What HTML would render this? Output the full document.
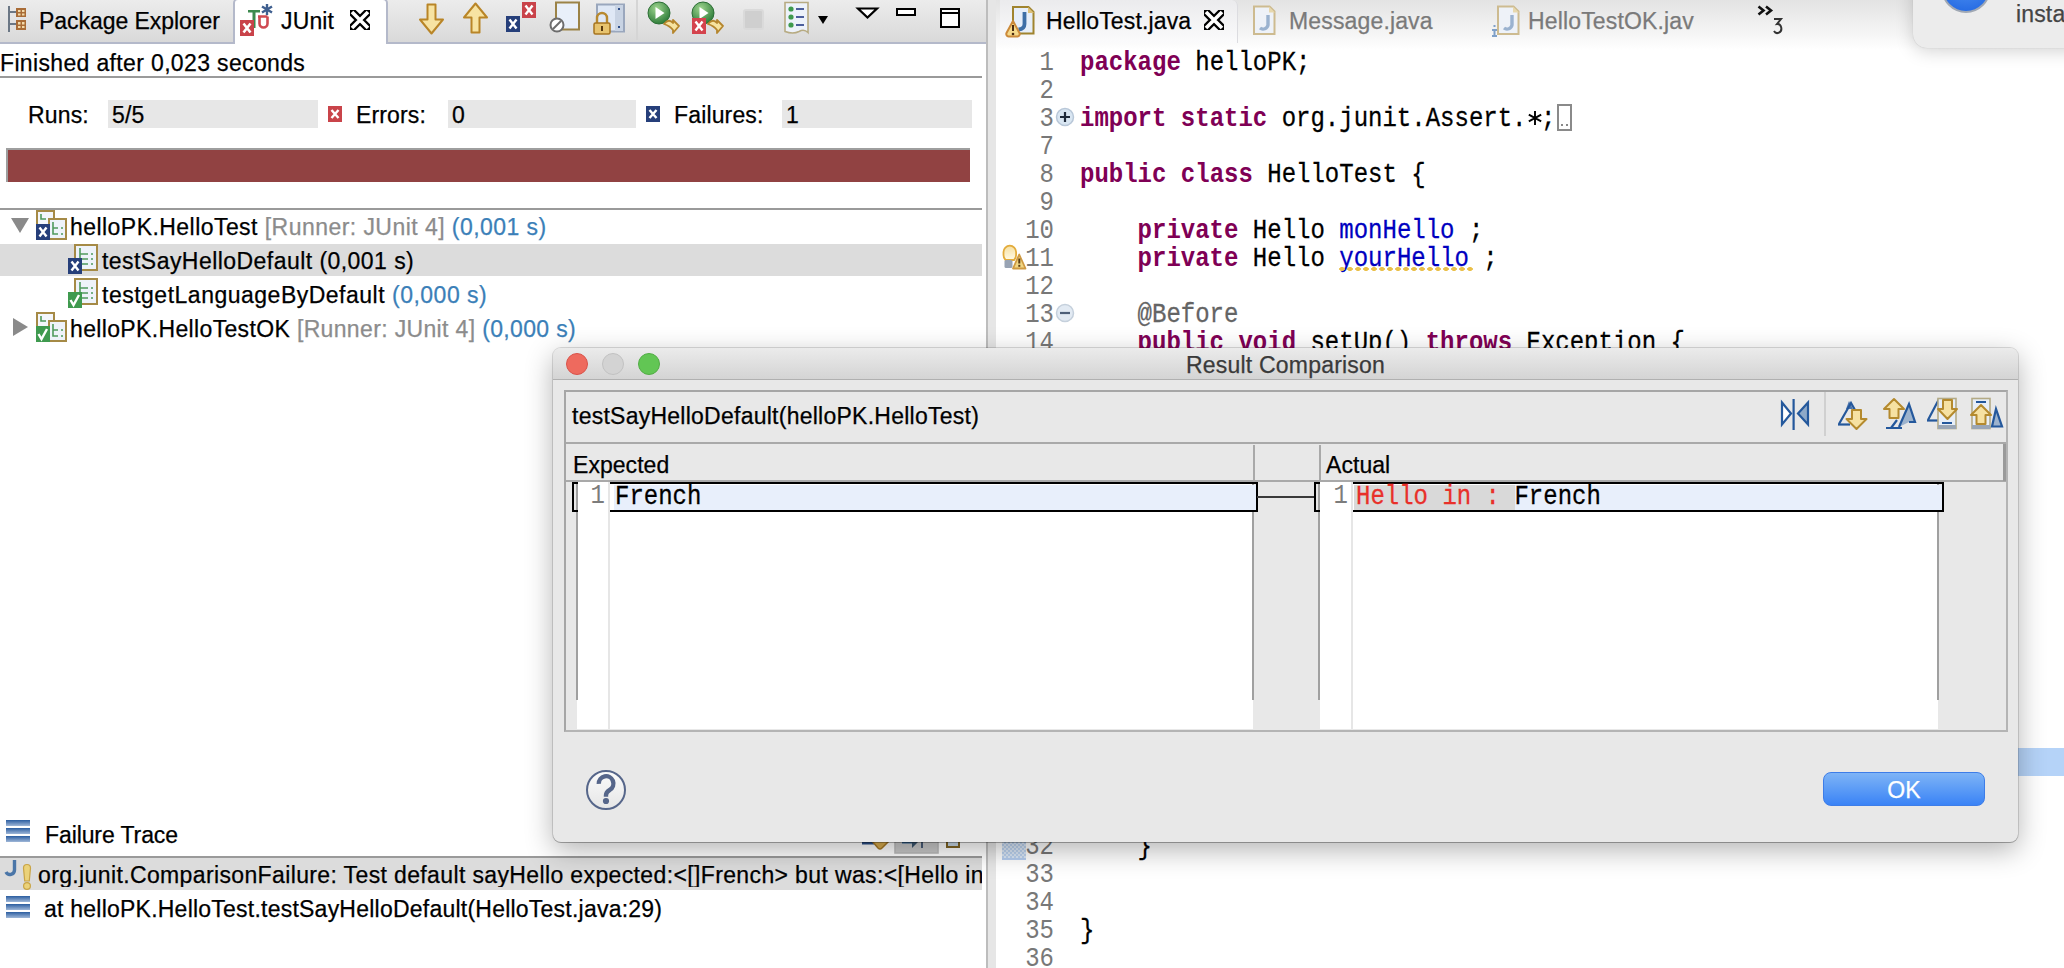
<!DOCTYPE html>
<html><head><meta charset="utf-8">
<style>
*{margin:0;padding:0;box-sizing:border-box}
html,body{width:2064px;height:968px;overflow:hidden;background:#fff;position:relative}
body{font-family:"Liberation Sans",sans-serif;font-size:22px;color:#000;-webkit-text-stroke:0.25px currentColor}
.a{position:absolute}
.t{position:absolute;white-space:pre;line-height:24px;letter-spacing:0.15px;font-size:23px;margin-top:1px}
.m{position:absolute;white-space:pre;font-family:"Liberation Mono",monospace;font-size:24px;line-height:28px;transform:scaleY(1.12);transform-origin:0 20.4px}
.kw{color:#7f0055;font-weight:bold;-webkit-text-stroke:0}
.fld{color:#0000c0}
.ln{color:#787878;text-align:right;-webkit-text-stroke:0}
.gray{color:#8c8c8c}
.blue{color:#3b7fb8}
svg{position:absolute;overflow:visible}
</style></head><body>

<!-- ============ LEFT PANEL ============ -->
<div class="a" id="left" style="left:0;top:0;width:986px;height:968px;background:#fff">
  <!-- tab bar -->
  <div class="a" style="left:0;top:0;width:986px;height:44px;background:linear-gradient(#ececec,#d9d9d9);border-bottom:2px solid #b4b9ca"></div>
  <!-- active JUnit tab -->
  <div class="a" style="left:233px;top:-2px;width:155px;height:46px;background:#fff;border:2px solid #b4b9ca;border-bottom:none;border-radius:5px 5px 0 0"></div>
  <div class="t" style="left:39px;top:8px;letter-spacing:-0.05px">Package Explorer</div>
  <div class="t" style="left:281px;top:8px">JUnit</div>
  <div class="a" style="left:986px;top:0;width:2px;height:968px;background:#bdbdbd"></div>
  <div class="a" style="left:988px;top:0;width:8px;height:968px;background:#e6e6e6"></div>

  <div class="t" style="left:0px;top:50px;letter-spacing:0.35px">Finished after 0,023 seconds</div>
  <div class="a" style="left:0;top:76px;width:982px;height:2px;background:#9a9a9a"></div>

  <div class="t" style="left:28px;top:102px">Runs:</div>
  <div class="a" style="left:108px;top:100px;width:210px;height:28px;background:#e7e7e7"></div>
  <div class="t" style="left:112px;top:102px">5/5</div>
  <div class="t" style="left:356px;top:102px">Errors:</div>
  <div class="a" style="left:448px;top:100px;width:188px;height:28px;background:#e7e7e7"></div>
  <div class="t" style="left:452px;top:102px">0</div>
  <div class="t" style="left:674px;top:102px">Failures:</div>
  <div class="a" style="left:782px;top:100px;width:190px;height:28px;background:#e7e7e7"></div>
  <div class="t" style="left:786px;top:102px">1</div>

  <div class="a" style="left:6px;top:148px;width:964px;height:34px;background:#914242;border-top:2px solid #9e9e9e;border-left:2px solid #9e9e9e"></div>
  <div class="a" style="left:0;top:208px;width:982px;height:2px;background:#9a9a9a"></div>

  <!-- tree -->
  <div class="a" style="left:0;top:244px;width:982px;height:32px;background:#dcdcdc"></div>
  <div class="t" style="left:70px;top:214px;letter-spacing:0.45px">helloPK.HelloTest <span class="gray">[Runner: JUnit 4]</span> <span class="blue">(0,001 s)</span></div>
  <div class="t" style="left:102px;top:248px;letter-spacing:0.45px">testSayHelloDefault (0,001 s)</div>
  <div class="t" style="left:102px;top:282px;letter-spacing:0.50px">testgetLanguageByDefault <span class="blue">(0,000 s)</span></div>
  <div class="t" style="left:70px;top:316px;letter-spacing:0.35px">helloPK.HelloTestOK <span class="gray">[Runner: JUnit 4]</span> <span class="blue">(0,000 s)</span></div>

  <!-- failure trace -->
  <div class="t" style="left:45px;top:822px;letter-spacing:-0.10px">Failure Trace</div>
  <div class="a" style="left:0;top:856px;width:982px;height:2px;background:#9a9a9a"></div>
  <div class="a" style="left:0;top:858px;width:982px;height:32px;background:#dcdcdc"></div>
  <div class="t" style="left:38px;top:862px;letter-spacing:0.37px;width:944px;overflow:hidden">org.junit.ComparisonFailure: Test default sayHello expected:&lt;[]French&gt; but was:&lt;[Hello in</div>
  <div class="t" style="left:44px;top:896px;letter-spacing:0.23px">at helloPK.HelloTest.testSayHelloDefault(HelloTest.java:29)</div>
</div>

<!-- ============ EDITOR ============ -->
<div class="a" id="editor" style="left:996px;top:0;width:1068px;height:968px;background:#fff;overflow:hidden">
  <div class="a" style="left:0;top:0;width:1068px;height:50px;background:linear-gradient(#e3e3e3,#f6f6f6 70%,#fff)"></div>
  <div class="a" style="left:4px;top:0;width:238px;height:43px;background:linear-gradient(#ebebed,#fbfbfc);border-right:1px solid #dcdce0;border-radius:0 6px 0 0"></div>
  <div class="t" style="left:50px;top:8px">HelloTest.java</div>
  <div class="t" style="left:293px;top:8px;color:#7a7a7a">Message.java</div>
  <div class="t" style="left:532px;top:8px;color:#7a7a7a">HelloTestOK.jav</div>
  <div class="m ln" style="left:0;top:50px;width:58px">1</div>
  <div class="m" style="left:84px;top:50px"><span class="kw">package</span> helloPK;</div>
  <div class="m ln" style="left:0;top:78px;width:58px">2</div>
  <div class="m ln" style="left:0;top:106px;width:58px">3</div>
  <div class="m" style="left:84px;top:106px"><span class="kw">import</span> <span class="kw">static</span> org.junit.Assert. ;</div>
  <div class="m ln" style="left:0;top:134px;width:58px">7</div>
  <div class="m ln" style="left:0;top:162px;width:58px">8</div>
  <div class="m" style="left:84px;top:162px"><span class="kw">public</span> <span class="kw">class</span> HelloTest {</div>
  <div class="m ln" style="left:0;top:190px;width:58px">9</div>
  <div class="m ln" style="left:0;top:218px;width:58px">10</div>
  <div class="m" style="left:84px;top:218px">    <span class="kw">private</span> Hello <span class="fld">monHello</span> ;</div>
  <div class="m ln" style="left:0;top:246px;width:58px">11</div>
  <div class="m" style="left:84px;top:246px">    <span class="kw">private</span> Hello <span class="fld">yourHello</span> ;</div>
  <div class="m ln" style="left:0;top:274px;width:58px">12</div>
  <div class="m ln" style="left:0;top:302px;width:58px">13</div>
  <div class="m" style="left:84px;top:302px">    <span style="color:#646464">@Before</span></div>
  <div class="m ln" style="left:0;top:330px;width:58px">14</div>
  <div class="m" style="left:84px;top:330px">    <span class="kw">public</span> <span class="kw">void</span> setUp() <span class="kw">throws</span> Exception {</div>
  <div class="m ln" style="left:0;top:834px;width:58px">32</div>
  <div class="m" style="left:84px;top:834px">    }</div>
  <div class="m ln" style="left:0;top:862px;width:58px">33</div>
  <div class="m ln" style="left:0;top:890px;width:58px">34</div>
  <div class="m ln" style="left:0;top:918px;width:58px">35</div>
  <div class="m" style="left:84px;top:918px">}</div>
  <div class="m ln" style="left:0;top:946px;width:58px">36</div>
</div>


<!-- ============ ICONS (left + editor) ============ -->
<!-- package explorer icon -->
<svg style="left:0;top:0" width="40" height="40">
  <rect x="8" y="6" width="2" height="26" fill="#6b7785"/>
  <rect x="10" y="11" width="6" height="2" fill="#6b7785"/><rect x="10" y="23" width="6" height="2" fill="#6b7785"/>
  <rect x="16" y="8" width="10" height="9" fill="#a96c37"/><rect x="16" y="20" width="10" height="10" fill="#a96c37"/>
  <rect x="18" y="10" width="2.5" height="2" fill="#f2d9a9"/><rect x="22" y="10" width="2.5" height="2" fill="#f2d9a9"/>
  <rect x="18" y="13.5" width="2.5" height="2" fill="#f2d9a9"/><rect x="22" y="13.5" width="2.5" height="2" fill="#f2d9a9"/>
  <rect x="18" y="22" width="2.5" height="2.5" fill="#f2d9a9"/><rect x="22" y="22" width="2.5" height="2.5" fill="#f2d9a9"/>
  <rect x="18" y="26" width="2.5" height="2" fill="#f2d9a9"/><rect x="22" y="26" width="2.5" height="2" fill="#f2d9a9"/>
</svg>
<!-- junit tab icon -->
<svg style="left:240px;top:0" width="40" height="40">
  <rect x="8" y="10" width="12" height="2.5" fill="#3d8a4e"/><rect x="12.5" y="10" width="3" height="18" fill="#3d8a4e"/>
  <path d="M18 16.5 h9.5 M19.5 16.5 v7 a4 4 0 0 0 8 0 v-7" stroke="#cf4a52" stroke-width="2.6" fill="none"/>
  <path d="M27 4 v11 M22 6.5 l10 6 M32 6.5 l-10 6" stroke="#3f5f8f" stroke-width="2.4"/>
  <rect x="0" y="20" width="14" height="16" fill="#c9434a"/>
  <path d="M3.5 23.5 l7 9 M10.5 23.5 l-7 9" stroke="#fff" stroke-width="2.6"/>
</svg>
<!-- junit tab close -->
<svg style="left:348px;top:8px" width="24" height="24">
  <svg x="2" y="2" width="20" height="20" style="position:static;overflow:hidden"><path d="M-1 -1 L21 21 M21 -1 L-1 21" stroke="#000" stroke-width="8"/>
  <path d="M2 2 L18 18 M18 2 L2 18" stroke="#fff" stroke-width="3.6"/></svg>
</svg>
<!-- down arrow -->
<svg style="left:418px;top:2px" width="30" height="34">
  <path d="M9.5 2.5 h8 v15 h7.5 l-11.5 14 l-11.5 -14 h7.5 z" fill="#f7e3a2" stroke="#b98527" stroke-width="2" stroke-linejoin="round"/>
</svg>
<!-- up arrow -->
<svg style="left:462px;top:2px" width="30" height="34">
  <path d="M13.5 1.5 l11.5 14 h-7.5 v15 h-8 v-15 h-7.5 z" fill="#f7e3a2" stroke="#b98527" stroke-width="2" stroke-linejoin="round"/>
</svg>
<!-- next/prev failure (blue x + red x) -->
<svg style="left:504px;top:0" width="36" height="36">
  <rect x="18" y="2" width="14" height="16" fill="#c9434a"/><path d="M21.5 5.5 l7 9 M28.5 5.5 l-7 9" stroke="#fff" stroke-width="2.4"/>
  <rect x="2" y="16" width="14" height="16" fill="#263f7a"/><path d="M5.5 19.5 l7 9 M12.5 19.5 l-7 9" stroke="#fff" stroke-width="2.4"/>
</svg>
<!-- filter page -->
<svg style="left:548px;top:0" width="36" height="36">
  <rect x="8" y="2.5" width="23" height="27" fill="#e9f0fa" stroke="#9b8347" stroke-width="2"/>
  <circle cx="9" cy="25" r="6.5" fill="#fff" stroke="#6d6d6d" stroke-width="2"/>
  <path d="M5 29 L13 21" stroke="#6d6d6d" stroke-width="2"/>
</svg>
<!-- scroll lock -->
<svg style="left:592px;top:0" width="36" height="36">
  <rect x="5" y="4.5" width="27" height="27" fill="#dfe8f5" stroke="#9aa7bd" stroke-width="2"/>
  <rect x="23" y="5" width="8" height="26" fill="#c8d3e3"/>
  <rect x="26" y="8" width="2" height="2" fill="#2e4f8a"/><rect x="26" y="26" width="2" height="2" fill="#2e4f8a"/>
  <path d="M5 24 v-6 a5 5 0 0 1 10 0 v6" stroke="#b8892e" stroke-width="2.4" fill="none"/>
  <rect x="2" y="23" width="16" height="11" rx="1.5" fill="#e7c36e" stroke="#a6741f" stroke-width="1.5"/>
  <rect x="9" y="26" width="2" height="5" fill="#5a3a10"/>
</svg>
<div class="a" style="left:636px;top:0;width:2px;height:40px;background:#d5d5d5"></div>
<!-- rerun -->
<svg style="left:646px;top:0" width="40" height="40">
  <defs><radialGradient id="gg" cx="0.4" cy="0.3" r="0.7"><stop offset="0" stop-color="#9fd58f"/><stop offset="1" stop-color="#2f7d3a"/></radialGradient></defs>
  <circle cx="13" cy="13" r="11" fill="url(#gg)" stroke="#2d6f36" stroke-width="1"/>
  <path d="M9.5 7 L18.5 13 L9.5 19 z" fill="#fff"/>
  <path d="M18 24 q5 -6 9 -1 v-3 l6 6 l-6 7 v-3 q-3 -4 -9 -6 z" fill="#f6e3a0" stroke="#b5862d" stroke-width="1.8" stroke-linejoin="round"/>
</svg>
<!-- rerun failed first -->
<svg style="left:690px;top:0" width="40" height="40">
  <circle cx="13" cy="13" r="11" fill="url(#gg)" stroke="#2d6f36" stroke-width="1"/>
  <path d="M9.5 7 L18.5 13 L9.5 19 z" fill="#fff"/>
  <rect x="2" y="18" width="14" height="16" fill="#d4434d"/><path d="M5.5 21.5 l7 9 M12.5 21.5 l-7 9" stroke="#fff" stroke-width="2.4"/>
  <path d="M18 24 q5 -6 9 -1 v-3 l6 6 l-6 7 v-3 q-3 -4 -9 -6 z" fill="#f6e3a0" stroke="#b5862d" stroke-width="1.8" stroke-linejoin="round"/>
</svg>
<!-- stop disabled -->
<div class="a" style="left:743px;top:9px;width:21px;height:21px;border-radius:3px;background:#cfcfcf;border:2px solid #dadada"></div>
<!-- history -->
<svg style="left:782px;top:0" width="34" height="36">
  <path d="M3 2.5 h23 v30 q-4 -4 -9 -1 q-6 3 -14 0 z" fill="#edf2fa" stroke="#b7ab82" stroke-width="1.6"/>
  <circle cx="9" cy="9" r="2.6" fill="#3f9a4d"/><circle cx="9" cy="17" r="2.6" fill="#3f9a4d"/><circle cx="9" cy="25" r="2.6" fill="#3f9a4d"/>
  <rect x="14" y="8" width="8" height="2" fill="#4c5f9c"/><rect x="14" y="16" width="8" height="2" fill="#4c5f9c"/><rect x="14" y="24" width="8" height="2" fill="#4c5f9c"/>
</svg>
<svg style="left:818px;top:16px" width="12" height="10"><path d="M0 0 h10 l-5 8 z" fill="#000"/></svg>
<!-- view menu -->
<svg style="left:856px;top:6px" width="24" height="14"><path d="M2 2.5 h19 l-9.5 9 z" fill="#fff" stroke="#000" stroke-width="2.2" stroke-linejoin="miter"/></svg>
<!-- minimize -->
<div class="a" style="left:896px;top:8px;width:20px;height:8px;border:2px solid #000;background:#fff"></div>
<!-- maximize -->
<div class="a" style="left:940px;top:8px;width:20px;height:20px;border:2px solid #000;border-top-width:6px;background:#fff"></div>
<div class="a" style="left:942px;top:10px;width:16px;height:2px;background:#fff"></div>

<!-- runs row icons -->
<svg style="left:328px;top:106px" width="14" height="16"><rect width="14" height="16" fill="#c9444a"/><path d="M3.5 4 l7 8 M10.5 4 l-7 8" stroke="#fff" stroke-width="2.4"/></svg>
<svg style="left:646px;top:106px" width="14" height="16"><rect width="14" height="16" fill="#263f7a"/><path d="M3.5 4 l7 8 M10.5 4 l-7 8" stroke="#fff" stroke-width="2.4"/></svg>

<!-- tree triangles -->
<svg style="left:10px;top:217px" width="20" height="18"><path d="M1 1 h18 l-9 15 z" fill="#8a8a8a"/></svg>
<svg style="left:12px;top:317px" width="18" height="20"><path d="M1 1 v18 l15 -9 z" fill="#8a8a8a"/></svg>
<!-- suite icon row1 -->
<svg style="left:34px;top:208px" width="36" height="34">
  <rect x="3" y="3" width="17" height="15" fill="#f3f6fb" stroke="#a58a46" stroke-width="2"/>
  <path d="M7 6 v5 h5" stroke="#4f9a5d" stroke-width="1.6" fill="none"/>
  <rect x="15" y="11" width="17" height="20" fill="#eef3fa" stroke="#a58a46" stroke-width="2"/>
  <path d="M19 14 v12 h5 M19 20 h5 M27 20 h2 M27 26 h2" stroke="#4f9a5d" stroke-width="1.6" fill="none"/>
  <rect x="2" y="16" width="14" height="16" fill="#263f7a"/><path d="M5.5 19.5 l7 9 M12.5 19.5 l-7 9" stroke="#fff" stroke-width="2.4"/>
</svg>
<!-- test icon row2 -->
<svg style="left:66px;top:242px" width="36" height="34">
  <rect x="9" y="3" width="22" height="25" fill="#eef3fa" stroke="#a58a46" stroke-width="2"/>
  <path d="M14 6 v16 h8 M14 12 h8 M14 17 h8 M25 12 h2 M25 17 h2 M25 22 h2" stroke="#4f9a5d" stroke-width="1.6" fill="none"/>
  <rect x="2" y="16" width="14" height="16" fill="#263f7a"/><path d="M5.5 19.5 l7 9 M12.5 19.5 l-7 9" stroke="#fff" stroke-width="2.4"/>
</svg>
<!-- test icon row3 -->
<svg style="left:66px;top:276px" width="36" height="34">
  <rect x="9" y="3" width="22" height="25" fill="#eef3fa" stroke="#a58a46" stroke-width="2"/>
  <path d="M14 6 v16 h8 M14 12 h8 M14 17 h8 M25 12 h2 M25 17 h2 M25 22 h2" stroke="#4f9a5d" stroke-width="1.6" fill="none"/>
  <rect x="2" y="16" width="14" height="16" fill="#3f9a4f"/><path d="M4.5 24 l3 5 l5.5 -10" stroke="#fff" stroke-width="2.4" fill="none"/>
</svg>
<!-- suite icon row4 -->
<svg style="left:34px;top:310px" width="36" height="34">
  <rect x="3" y="3" width="17" height="15" fill="#f3f6fb" stroke="#a58a46" stroke-width="2"/>
  <path d="M7 6 v5 h5" stroke="#4f9a5d" stroke-width="1.6" fill="none"/>
  <rect x="15" y="11" width="17" height="20" fill="#eef3fa" stroke="#a58a46" stroke-width="2"/>
  <path d="M19 14 v12 h5 M19 20 h5 M27 20 h2 M27 26 h2" stroke="#4f9a5d" stroke-width="1.6" fill="none"/>
  <rect x="2" y="16" width="14" height="16" fill="#3f9a4f"/><path d="M4.5 24 l3 5 l5.5 -10" stroke="#fff" stroke-width="2.4" fill="none"/>
</svg>

<!-- failure trace icons -->
<svg style="left:6px;top:820px" width="26" height="24">
  <defs><linearGradient id="bl" x1="0" y1="0" x2="0" y2="1"><stop offset="0" stop-color="#2b5da0"/><stop offset="1" stop-color="#9fb7d8"/></linearGradient></defs>
  <rect x="0" y="0" width="24" height="6" fill="url(#bl)"/><rect x="0" y="8" width="24" height="6" fill="url(#bl)"/><rect x="0" y="16" width="24" height="6" fill="url(#bl)"/>
</svg>
<svg style="left:6px;top:896px" width="26" height="24">
  <rect x="0" y="0" width="24" height="6" fill="url(#bl)"/><rect x="0" y="8" width="24" height="6" fill="url(#bl)"/><rect x="0" y="16" width="24" height="6" fill="url(#bl)"/>
</svg>
<svg style="left:4px;top:858px" width="30" height="34">
  <path d="M10.5 2 v10 a4.5 4.5 0 0 1 -8.5 2" stroke="#4b76a8" stroke-width="3.4" fill="none"/>
  <path d="M19.5 10 a3.5 3.5 0 0 1 7 0 l-1.2 13 h-4.6 z" fill="#ebd27a" stroke="#c9a446" stroke-width="1.2"/>
  <circle cx="23" cy="28" r="3.4" fill="#ebd27a" stroke="#c9a446" stroke-width="1.2"/>
</svg>
<!-- failure trace toolbar (mostly hidden) -->
<svg style="left:860px;top:830px" width="100" height="26">
  <path d="M2 13 h12" stroke="#2b4f87" stroke-width="3"/>
  <path d="M12 11 h17 l-7 7 q-2 2 -4 0 z" fill="#d9ad4f" stroke="#a87a26" stroke-width="1.5"/>
  <rect x="35" y="4" width="43" height="19" fill="#c9c9c9" stroke="#bdbdbd" stroke-width="1.6"/>
  <path d="M42 12 h14" stroke="#33638f" stroke-width="3"/>
  <path d="M52 10 h8 l-8 8 z" fill="#3b556e"/>
  <rect x="61" y="10" width="2" height="8" fill="#4a5d78"/>
  <rect x="87" y="8" width="12" height="9" fill="#c8d8e6" stroke="#7f6424" stroke-width="2"/>
</svg>

<!-- editor tab icons -->
<svg style="left:1004px;top:4px" width="34" height="34">
  <path d="M9 3 h15.5 l5 5 v21.5 h-20.5 z" fill="#e6eef9" stroke="#a0842f" stroke-width="2"/>
  <path d="M24 3 v6 h6" fill="#dcc07a"/>
  <path d="M20.5 8 v12 q0 5 -6 5.5" stroke="#3d6ea6" stroke-width="3.8" fill="none"/>
  <path d="M9 17 l-6.5 12 a2.5 2.5 0 0 0 2 3.5 h9 a2.5 2.5 0 0 0 2 -3.5 z" fill="#f5d98a" stroke="#cc8a3a" stroke-width="2" stroke-linejoin="round"/>
  <rect x="8" y="21" width="2" height="6" fill="#4a2a10"/><circle cx="9" cy="30" r="1.3" fill="#4a2a10"/>
</svg>
<svg style="left:1202px;top:8px" width="24" height="24">
  <svg x="2" y="2" width="20" height="20" style="position:static;overflow:hidden"><path d="M-1 -1 L21 21 M21 -1 L-1 21" stroke="#000" stroke-width="8"/>
  <path d="M2 2 L18 18 M18 2 L2 18" stroke="#fff" stroke-width="3.6"/></svg>
</svg>
<svg style="left:1250px;top:4px" width="34" height="34">
  <path d="M4 2.5 h15.5 l5 5 v22.5 h-20.5 z" fill="#eef2f8" stroke="#cdbb90" stroke-width="2"/>
  <path d="M19 2.5 v6 h6" fill="#e7d8ad"/>
  <path d="M18 11 v10 a5 5 0 0 1 -8 3" stroke="#9ab2cf" stroke-width="3.4" fill="none"/>
</svg>
<svg style="left:1490px;top:4px" width="34" height="34">
  <path d="M8 2.5 h15.5 l5 5 v22.5 h-20.5 z" fill="#eef2f8" stroke="#cdbb90" stroke-width="2"/>
  <path d="M23 2.5 v6 h6" fill="#e7d8ad"/>
  <path d="M22 11 v10 a5 5 0 0 1 -8 3" stroke="#9ab2cf" stroke-width="3.4" fill="none"/>
  <rect x="2" y="25" width="5" height="2" fill="#7fa0c8"/><rect x="3.5" y="27" width="2" height="6" fill="#7fa0c8"/><rect x="2" y="31" width="5" height="2" fill="#7fa0c8"/><rect x="3.5" y="21" width="2" height="2" fill="#7fa0c8"/>
</svg>
<!-- overflow >>3 -->
<svg style="left:1756px;top:4px" width="32" height="30">
  <path d="M2.5 2.5 l5 4 l-5 4 M10 2.5 l5 4 l-5 4" stroke="#111" stroke-width="2.6" fill="none"/>
  <path d="M18 15 h7 l-4 5 a4 4.5 0 1 1 -3 7" stroke="#333" stroke-width="2" fill="none"/>
</svg>

<!-- gutter icons -->
<svg style="left:1055px;top:107px" width="22" height="22">
  <circle cx="10" cy="10" r="8.5" fill="#d9e6f2" stroke="#b8c7d8" stroke-width="1.5"/>
  <path d="M5 10 h10 M10 5 v10" stroke="#1f2a3a" stroke-width="2.2"/>
</svg>
<svg style="left:1055px;top:303px" width="22" height="22">
  <circle cx="10" cy="10" r="8.5" fill="#e2eaf3" stroke="#c5d0dc" stroke-width="1.5"/>
  <path d="M5 10 h10" stroke="#4e5f78" stroke-width="2.2"/>
</svg>
<svg style="left:1000px;top:242px" width="30" height="30">
  <defs><linearGradient id="bulb" x1="0" y1="0" x2="0" y2="1"><stop offset="0" stop-color="#f6dfa0"/><stop offset="1" stop-color="#fffbe8"/></linearGradient></defs>
  <path d="M3.5 10 a6.3 6.3 0 0 1 12.6 0 v3 q0 3 -2 5 h-8.6 q-2 -2 -2 -5 z" fill="url(#bulb)" stroke="#e3ac3c" stroke-width="1.8"/>
  <rect x="4.5" y="18" width="8" height="8" rx="1.5" fill="#98a3b3"/>
  <path d="M19.2 12.5 l-6.2 14 h12.5 z" fill="#f1d683" stroke="#cf9a42" stroke-width="1.8" stroke-linejoin="round"/>
  <rect x="18.3" y="16.5" width="2" height="5" fill="#5a3c12"/><rect x="18.3" y="22.8" width="2" height="2" fill="#5a3c12"/>
</svg>
<svg style="left:1528px;top:111px" width="14" height="14"><path d="M7 0 v14 M0.8 3.6 L13.2 10.4 M0.8 10.4 L13.2 3.6" stroke="#000" stroke-width="1.9"/></svg>
<!-- folded import box -->
<div class="a" style="left:1557px;top:104px;width:15px;height:27px;border:2px solid #8a8a8a;background:#fff"></div>
<div class="a" style="left:1561px;top:124px;width:2px;height:2px;background:#888"></div><div class="a" style="left:1566px;top:124px;width:2px;height:2px;background:#888"></div>
<!-- warning underline -->
<div class="a" style="left:1338px;top:267px;width:135px;height:4px;background:radial-gradient(ellipse 3px 2px at 4px 2px,#eac04a 85%,transparent 100%) 0 0/8px 4px repeat-x"></div>
<!-- checker marker line 32 -->
<div class="a" style="left:1002px;top:842px;width:24px;height:18px;background:repeating-conic-gradient(#bcd3f0 0 25%,#dce8f7 0 50%) 0 0/4px 4px;border-bottom:2px solid #b5cdef"></div>
<!-- right blue highlight -->
<div class="a" style="left:2000px;top:748px;width:64px;height:28px;background:#b5d3f8"></div>
<!-- notification popup -->
<div class="a" style="left:1913px;top:-20px;width:180px;height:68px;background:#ececec;border-radius:14px;box-shadow:0 3px 18px rgba(0,0,0,0.18),0 0 1px rgba(0,0,0,0.2)"></div>
<div class="a" style="left:1941px;top:-38px;width:50px;height:51px;border-radius:50%;background:radial-gradient(circle at 50% 30%,#5a9cf5,#1c62e0);border:2px solid #a0a8b4"></div>
<div class="t" style="left:2016px;top:1px;color:#444">insta</div>

<!-- ============ DIALOG ============ -->
<div class="a" id="dlg" style="left:553px;top:348px;width:1465px;height:494px;background:#e8e8e8;border-radius:8px;box-shadow:0 8px 28px rgba(0,0,0,0.3),0 1px 0 rgba(0,0,0,0.2),0 0 0 1px rgba(0,0,0,0.13)">
  <div class="a" style="left:0;top:0;width:1465px;height:32px;background:linear-gradient(#ebebeb,#d4d4d4);border-bottom:1px solid #b0b0b0;border-radius:8px 8px 0 0"></div>
  <div class="t" style="left:0;top:4px;width:1465px;text-align:center;color:#3a3a3a;letter-spacing:0.2px">Result Comparison</div>
  <div class="a" style="left:13px;top:5px;width:22px;height:22px;border-radius:50%;background:#ee6a5e;border:1px solid #d9534a"></div>
  <div class="a" style="left:49px;top:5px;width:22px;height:22px;border-radius:50%;background:#d3d3d3;border:1px solid #c2c2c2"></div>
  <div class="a" style="left:85px;top:5px;width:22px;height:22px;border-radius:50%;background:#62c654;border:1px solid #52ad45"></div>
  <!-- group box -->
  <div class="a" style="left:11px;top:42px;width:1444px;height:342px;border:2px solid #a6a6a6;border-right-color:#b4b4b4;border-bottom-color:#b4b4b4"></div>
  <div class="t" style="left:19px;top:55px;letter-spacing:0.25px">testSayHelloDefault(helloPK.HelloTest)</div>
  <div class="a" style="left:13px;top:94px;width:1440px;height:2px;background:#a9a9a9"></div>
  <div class="a" style="left:1271px;top:44px;width:2px;height:44px;background:#d0d0d0"></div>
  <!-- dialog toolbar icons (abs x - 553, abs y - 348) -->
  <svg style="left:1226px;top:50px" width="36" height="34">
    <path d="M3 4.5 L12 15.5 L3 26.5 z" fill="#fff" stroke="#24589c" stroke-width="2.2" stroke-linejoin="miter"/>
    <rect x="13.5" y="1" width="2.2" height="31" fill="#24589c"/>
    <path d="M29 4.5 L19 15.5 L29 26.5 z" fill="#8ea9c8" stroke="#24589c" stroke-width="2.2"/>
  </svg>
  <svg style="left:1284px;top:49px" width="36" height="40">
    <path d="M2 27 L14 6 L18 13" fill="none" stroke="#24589c" stroke-width="2.2"/>
    <path d="M1 27.5 h12" stroke="#24589c" stroke-width="2.2"/>
    <path d="M12 4 L16 12 h-7 z" fill="#24589c" opacity="0.8"/>
    <path d="M15 13 h9 v9 h5.5 l-10 10 l-10 -10 h5.5 z" fill="#f6e1a2" stroke="#b48a2e" stroke-width="2" stroke-linejoin="round"/>
  </svg>
  <svg style="left:1329px;top:49px" width="36" height="40">
    <path d="M12 2 l10 10 h-5.5 v9 h-9 v-9 h-5.5 z" fill="#f6e1a2" stroke="#b48a2e" stroke-width="2" stroke-linejoin="round"/>
    <path d="M17 30 L27 7 L33 25 h-6 M4 31 h16 M9 31 l6 -8" fill="#9db3cd" stroke="#24589c" stroke-width="2.2"/>
  </svg>
  <svg style="left:1373px;top:49px" width="36" height="40">
    <path d="M2 23 L12 4 L17 15" fill="none" stroke="#24589c" stroke-width="2.2"/>
    <path d="M1 23.5 h12" stroke="#24589c" stroke-width="2.2"/>
    <rect x="12" y="1.5" width="18" height="30" fill="#e7eef7" stroke="#b3aa86" stroke-width="1.6"/>
    <rect x="12" y="28" width="18" height="4" fill="#9aa6b5"/>
    <path d="M17 3 h9 v9 h5 l-9.5 10 l-9.5 -10 h5 z" fill="#f6e1a2" stroke="#b48a2e" stroke-width="2" stroke-linejoin="round"/>
    <path d="M16 26 h10" stroke="#24589c" stroke-width="2"/>
  </svg>
  <svg style="left:1417px;top:49px" width="36" height="40">
    <rect x="2" y="1.5" width="18" height="30" fill="#e7eef7" stroke="#b3aa86" stroke-width="1.6"/>
    <rect x="2" y="28" width="18" height="4" fill="#9aa6b5"/>
    <path d="M6 5 h10" stroke="#24589c" stroke-width="2"/>
    <path d="M11 8 l10 10 h-5.5 v9 h-9 v-9 h-5.5 z" fill="#f6e1a2" stroke="#b48a2e" stroke-width="2" stroke-linejoin="round"/>
    <path d="M22 29.5 h10 L26 12 z" fill="#9db3cd" stroke="#24589c" stroke-width="2.2"/>
  </svg>
  <!-- expected header -->
  <div class="t" style="left:20px;top:104px;letter-spacing:0.05px">Expected</div>
  <div class="a" style="left:13px;top:132px;width:1440px;height:2px;background:#a9a9a9"></div>
  <div class="a" style="left:700px;top:97px;width:2px;height:36px;background:#a9a9a9"></div>
  <!-- actual header -->
  <div class="a" style="left:766px;top:97px;width:2px;height:36px;background:#a9a9a9"></div>
  <div class="t" style="left:773px;top:104px;letter-spacing:0.05px">Actual</div>
  <div class="a" style="left:766px;top:132px;width:686px;height:2px;background:#a9a9a9"></div>
  <div class="a" style="left:1450px;top:96px;width:3px;height:37px;background:#9a9a9a"></div>
  <!-- expected text area -->
  <div class="a" style="left:24px;top:134px;width:676px;height:247px;background:#fff"></div>
  <div class="a" style="left:23px;top:134px;width:2px;height:218px;background:#a0a0a0"></div>
  <div class="a" style="left:699px;top:134px;width:2px;height:218px;background:#a0a0a0"></div>
  <div class="a" style="left:55px;top:134px;width:2px;height:247px;background:#e6e6e6"></div>
  <div class="m ln" style="left:24px;top:135px;width:28px;font-size:24px;color:#7c7c7c">1</div>
  <div class="a" style="left:61px;top:137px;width:643px;height:25px;background:#e8effb"></div>
  <div class="a" style="left:57px;top:134px;width:648px;height:30px;border:2.5px solid #000;border-left:none"></div>
  <div class="a" style="left:19px;top:134px;width:6px;height:30px;border:2.5px solid #000;border-right:none"></div>
  <div class="m" style="left:62px;top:136px;transform:scaleY(1.14)">French</div>
  <div class="a" style="left:704px;top:148px;width:58px;height:2px;background:#3a3a3a"></div>
  <!-- actual text area -->
  <div class="a" style="left:767px;top:134px;width:618px;height:247px;background:#fff"></div>
  <div class="a" style="left:765px;top:134px;width:2px;height:218px;background:#a0a0a0"></div>
  <div class="a" style="left:1384px;top:134px;width:2px;height:218px;background:#a0a0a0"></div>
  <div class="a" style="left:798px;top:134px;width:2px;height:247px;background:#e6e6e6"></div>
  <div class="m ln" style="left:767px;top:135px;width:28px;font-size:24px;color:#7c7c7c">1</div>
  <div class="a" style="left:801px;top:137px;width:589px;height:25px;background:#e8effb"></div>
  <div class="a" style="left:801px;top:137px;width:161px;height:25px;background:#d9d9d9"></div>
  <div class="a" style="left:800px;top:134px;width:591px;height:30px;border:2.5px solid #000;border-left:none"></div>
  <div class="a" style="left:761px;top:134px;width:6px;height:30px;border:2.5px solid #000;border-right:none"></div>
  <div class="m" style="left:803px;top:136px;transform:scaleY(1.14)"><span style="color:#e8302a">Hello in : </span>French</div>
  <!-- help -->
  <svg style="left:33px;top:422px" width="40" height="40">
    <defs><linearGradient id="hg" x1="0" y1="0" x2="0" y2="1"><stop offset="0" stop-color="#fbfbfb"/><stop offset="1" stop-color="#e6e6e6"/></linearGradient></defs>
    <circle cx="20" cy="20" r="19" fill="url(#hg)" stroke="#56668a" stroke-width="2"/>
    <path d="M12.8 13.8 a7.3 7.3 0 1 1 11 6 q-3.8 2.5 -3.8 5.2 v1.8" fill="none" stroke="#56668a" stroke-width="4.4"/>
    <circle cx="20" cy="31" r="3.1" fill="#56668a"/>
  </svg>
  <!-- OK -->
  <div class="a" style="left:1270px;top:424px;width:162px;height:34px;border-radius:8px;background:linear-gradient(#7eb4f6,#3a83f6);border:1px solid #3d7de8"></div>
  <div class="t" style="left:1270px;top:429px;width:162px;text-align:center;color:#fff;font-size:23px">OK</div>
</div>

</body></html>
